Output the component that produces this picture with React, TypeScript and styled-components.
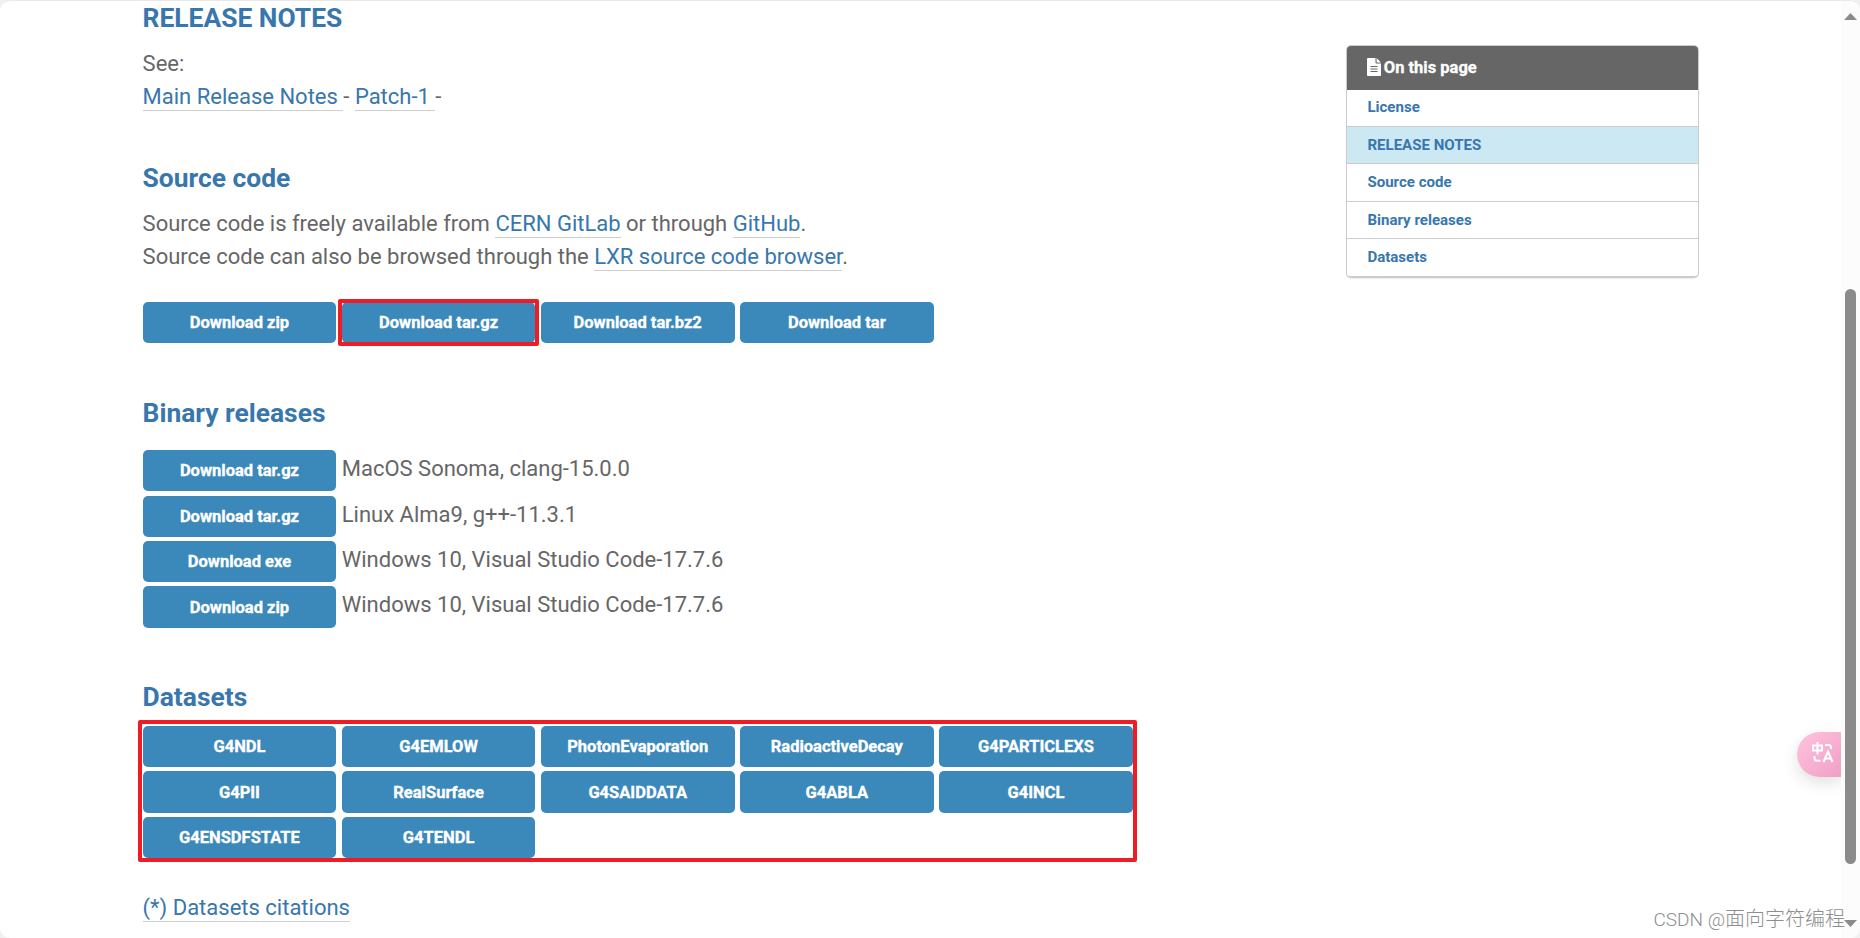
import React from "react";
import styled, { createGlobalStyle } from "styled-components";

const GlobalStyle = createGlobalStyle`
  html, body { margin: 0; padding: 0; background: #f1f1f1; }
  * { box-sizing: border-box; }
`;

const Window = styled.div`
  position: relative;
  display: flex;
  width: 1860px;
  height: 938px;
  overflow: hidden;
  background: #fff;
  border-top: 1px solid #e9e9e9;
  border-radius: 10px;
  font-family: Roboto, "Liberation Sans", sans-serif;
  font-size: 22px;
  line-height: 33px;
  color: #666;
`;

const Page = styled.div`
  display: flex;
  justify-content: space-between;
  align-items: flex-start;
  flex: 1;
  padding: 0 142px 0 142.6px;
`;

const Article = styled.main`
  width: 1000px;
`;

const Heading = styled.h2<{ $top?: number; $bottom?: number }>`
  margin: ${(p) => p.$top ?? 0}px 0 ${(p) => p.$bottom ?? 0}px;
  font-size: 26.4px;
  line-height: 34px;
  font-weight: 700;
  color: #3876ae;
`;

const Paragraph = styled.p<{ $top?: number }>`
  margin: ${(p) => p.$top ?? 0}px 0 0;
  white-space: pre-wrap;
`;

const Link = styled.a`
  color: #3876ae;
  border-bottom: 1px solid #d0d0d0;
  padding-bottom: 1px;
`;

const ButtonGrid = styled.div<{ $top?: number }>`
  position: relative;
  display: grid;
  grid-template-columns: repeat(5, 193.7px);
  grid-auto-rows: 41.12px;
  gap: 4.25px 5.45px;
  margin-top: ${(p) => p.$top ?? 0}px;
`;

const Button = styled.a`
  display: flex;
  align-items: center;
  justify-content: center;
  width: 193.7px;
  height: 41.12px;
  padding-top: 1.1px;
  border-radius: 5px;
  background: #3b88ba;
  color: #fff;
  font-size: 16.5px;
  font-weight: 700;
  line-height: 20px;
  -webkit-text-stroke: 0.35px #fff;
`;

const Releases = styled.div`
  display: flex;
  flex-direction: column;
  gap: 4.25px;
`;

const Release = styled.div`
  display: flex;
  align-items: flex-start;
  gap: 5.45px;
  height: 41.12px;
`;

const Platform = styled.span`
  padding-top: 1.9px;
  line-height: 33px;
`;

const Mark = styled.div<{ $x: number; $y: number; $w: number; $h: number }>`
  position: absolute;
  left: ${(p) => p.$x}px;
  top: ${(p) => p.$y}px;
  width: ${(p) => p.$w}px;
  height: ${(p) => p.$h}px;
  border: 4px solid #ee1c25;
  border-radius: 2px;
`;

const Contents = styled.nav`
  width: 353px;
  margin-top: 44px;
  border: 1px solid #ccc;
  border-bottom-width: 2px;
  border-radius: 5px;
  overflow: hidden;
  box-shadow: 0 1px 1px rgba(0, 0, 0, 0.08);
`;

const ContentsTitle = styled.div`
  display: flex;
  align-items: center;
  gap: 2.8px;
  height: 44px;
  padding: 0 0 2px 20px;
  background: #666;
  color: #fff;
  font-size: 16.5px;
  font-weight: 700;
  -webkit-text-stroke: 0.3px #fff;
`;

const ContentsItem = styled.a<{ $active?: boolean }>`
  display: block;
  height: 37.4px;
  padding-left: 20.4px;
  border-bottom: 1px solid #ccc;
  background: ${(p) => (p.$active ? "#cce8f3" : "#fff")};
  color: #3876ae;
  font-size: 15.05px;
  font-weight: 700;
  line-height: 36px;
  &:nth-child(2) { height: 36.9px; line-height: 35px; }
  &:last-child { height: 36.9px; border-bottom: 0; }
`;

const ScrollTrack = styled.div`
  display: flex;
  flex-direction: column;
  align-items: center;
  width: 19px;
  padding: 12px 0 10px;
  background: #fcfcfc;
`;

const Thumb = styled.div`
  width: 11px;
  height: 575px;
  margin: 269px 0 56px;
  border-radius: 6px;
  background: #8b8b8b;
`;

const Translate = styled.div`
  position: absolute;
  top: 731px;
  right: 19px;
  width: 44.5px;
  height: 45px;
  padding: 10px 0 0 15.5px;
  border-radius: 23px 0 0 23px;
  background: linear-gradient(135deg, #ffc4de, #f09fc5);
  box-shadow: 0 6px 16px rgba(0, 0, 0, 0.12);
  clip-path: inset(-30px 0 -40px -40px);
  line-height: 0;
`;

const Watermark = styled.div`
  position: absolute;
  right: 15px;
  bottom: 4px;
  font-family: "Noto Sans CJK SC", sans-serif;
  font-size: 20px;
  line-height: 28px;
  font-weight: 300;
  color: #8e8e8e;
  white-space: nowrap;
`;

const WatermarkLatin = styled.span`
  font-family: Roboto, sans-serif;
  font-size: 19px;
`;

const datasets = [
  "G4NDL", "G4EMLOW", "PhotonEvaporation", "RadioactiveDecay", "G4PARTICLEXS",
  "G4PII", "RealSurface", "G4SAIDDATA", "G4ABLA", "G4INCL",
  "G4ENSDFSTATE", "G4TENDL",
];

const releases = [
  ["Download tar.gz", "MacOS Sonoma, clang-15.0.0"],
  ["Download tar.gz", "Linux Alma9, g++-11.3.1"],
  ["Download exe", "Windows 10, Visual Studio Code-17.7.6"],
  ["Download zip", "Windows 10, Visual Studio Code-17.7.6"],
];

const sections = ["License", "RELEASE NOTES", "Source code", "Binary releases", "Datasets"];

export default function App() {
  return (
    <Window>
      <GlobalStyle />
      <Page>
        <Article>
          <Heading>RELEASE NOTES</Heading>
          <Paragraph $top={12}>
            See:<br />
            <Link>Main Release Notes </Link>- <Link>Patch-1 </Link>-
          </Paragraph>
          <Heading $top={48}>Source code</Heading>
          <Paragraph $top={12}>
            Source code is freely available from <Link>CERN GitLab</Link> or through <Link>GitHub</Link>.<br />
            Source code can also be browsed through the <Link>LXR source code browser</Link>.
          </Paragraph>
          <ButtonGrid $top={29}>
            <Button>Download zip</Button>
            <Button>Download tar.gz</Button>
            <Button>Download tar.bz2</Button>
            <Button>Download tar</Button>
            <Mark $x={195.6} $y={-3} $w={201} $h={47} />
          </ButtonGrid>
          <Heading $top={52.88} $bottom={20.35}>Binary releases</Heading>
          <Releases>
            {releases.map(([label, platform], i) => (
              <Release key={i}>
                <Button>{label}</Button>
                <Platform>{platform}</Platform>
              </Release>
            ))}
          </Releases>
          <Heading $top={52.6} $bottom={11.95}>Datasets</Heading>
          <ButtonGrid>
            {datasets.map((name) => (
              <Button key={name}>{name}</Button>
            ))}
            <Mark $x={-4.6} $y={-6} $w={999} $h={142} />
          </ButtonGrid>
          <Paragraph $top={33}>
            <Link>(*) Datasets citations</Link>
          </Paragraph>
        </Article>
        <Contents>
          <ContentsTitle>
            <svg width="14" height="18" viewBox="0 0 14 18">
              <path fill="#fff" d="M1 0H8.5V4.5Q8.5 5.5 9.5 5.5H14V17Q14 18 13 18H1Q0 18 0 17V1Q0 0 1 0ZM9.6 0 14 4.4H9.6Z" />
              <path stroke="#666" strokeWidth="1" d="M3.5 8.5H10.5M3.5 11H10.5M3.5 13.5H10.5" />
            </svg>
            On this page
          </ContentsTitle>
          {sections.map((s) => (
            <ContentsItem key={s} $active={s === "RELEASE NOTES"}>{s}</ContentsItem>
          ))}
        </Contents>
      </Page>
      <ScrollTrack>
        <svg width="13" height="7" viewBox="0 0 13 7"><path fill="#8b8b8b" d="M0 7 6.5 0 13 7Z" /></svg>
        <Thumb />
        <svg width="13" height="7" viewBox="0 0 13 7"><path fill="#8b8b8b" d="M0 0H13L6.5 7Z" /></svg>
      </ScrollTrack>
      <Translate>
        <svg width="22" height="21" viewBox="0 0 22 21" fill="none" stroke="#fff" strokeWidth="2">
          <path d="M1 3.5H10V8.5H1ZM5.5 0V12.5" />
          <path d="M13 3H16.5Q19 3 19 5.5V7M2.500 14V16Q2.500 18.700 5 18.700H8.500" />
          <path d="M11.500 20 16 9.500 20.500 20M13 16.500H19" />
        </svg>
      </Translate>
      <Watermark><WatermarkLatin>CSDN @</WatermarkLatin>面向字符编程</Watermark>
    </Window>
  );
}
